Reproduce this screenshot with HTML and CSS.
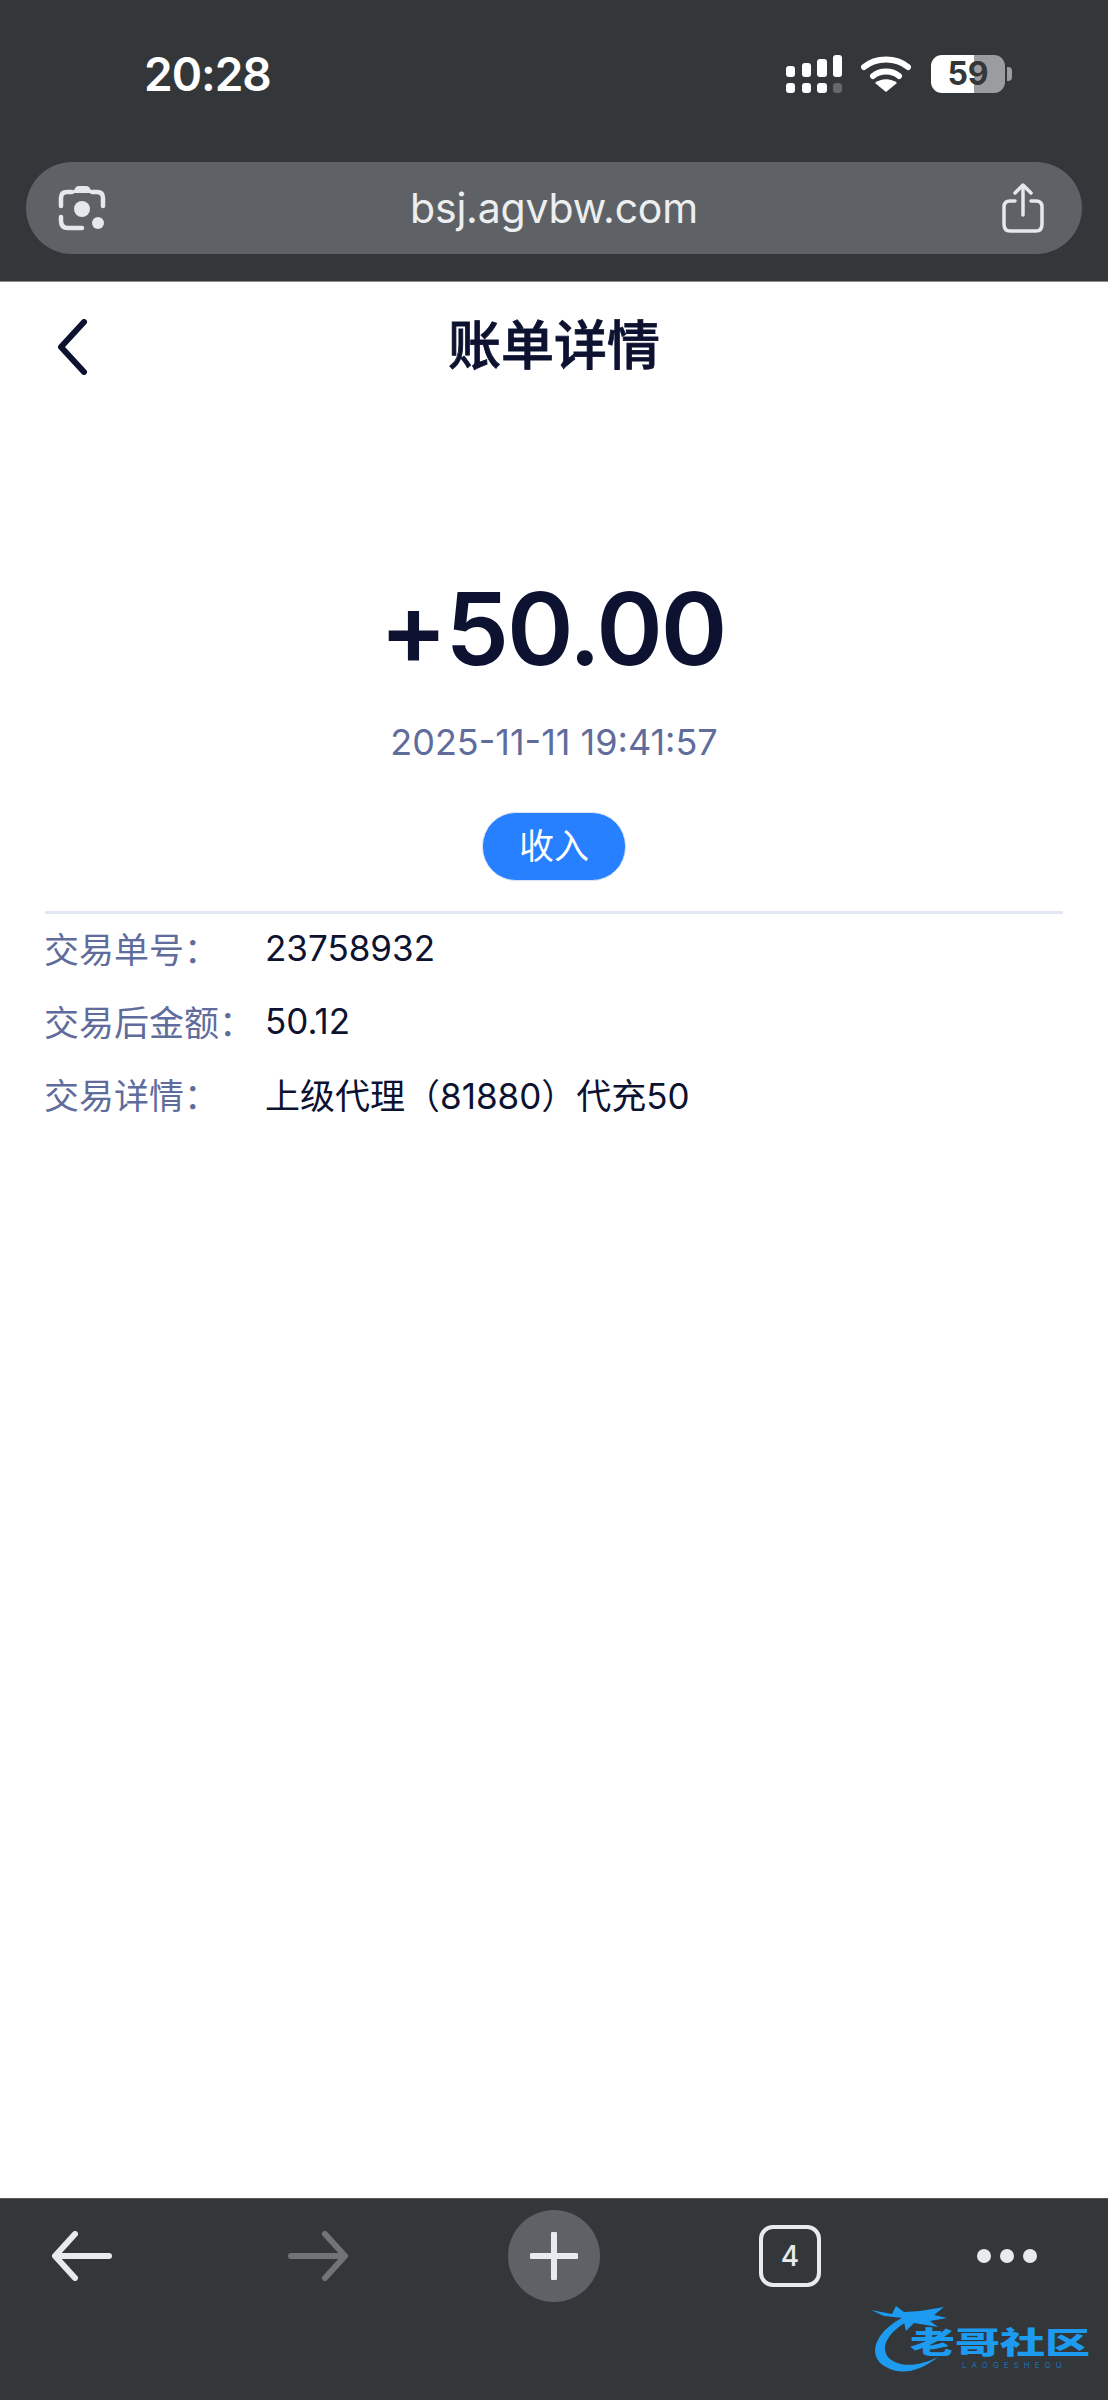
FILE: index.html
```html
<!DOCTYPE html>
<html lang="zh-CN">
<head>
  <meta charset="UTF-8" />
  <meta name="viewport" content="width=device-width, initial-scale=1.0"/>
  <title>账单详情</title>
  <link rel="stylesheet" href="styles.css">
</head>
<body>
  <header class="browser-top">
    <div class="status-bar">
      <span class="clock">20:28</span>
      <div class="status-icons">
        <svg class="signal" width="56" height="38" viewBox="0 0 56 38">
          <g fill="#fff">
            <rect x="0" y="11" width="9" height="11" rx="3"/>
            <rect x="16" y="8" width="9" height="14" rx="3"/>
            <rect x="31" y="4" width="10" height="18" rx="3"/>
            <rect x="47" y="0" width="9" height="22" rx="3"/>
            <rect x="0" y="28" width="9" height="10" rx="3"/>
            <rect x="16" y="28" width="9" height="10" rx="3"/>
            <rect x="31" y="28" width="10" height="10" rx="3"/>
            <rect x="47" y="28" width="9" height="10" rx="3" fill="#66686b"/>
          </g>
        </svg>
        <svg class="wifi" width="50" height="36" viewBox="0 0 50 36">
          <path d="M3 11 C15 1 35 1 47 11" fill="none" stroke="#fff" stroke-width="6" stroke-linecap="round"/>
          <path d="M12 20 C19 14 31 14 38 20" fill="none" stroke="#fff" stroke-width="6" stroke-linecap="round"/>
          <path d="M25 36 L14 27 C20 22 30 22 36 27 Z" fill="#fff"/>
        </svg>
        <div class="battery">
          <div class="battery-body">59</div>
          <div class="battery-cap"></div>
        </div>
      </div>
    </div>
    <div class="url-bar">
      <svg class="lens" width="48" height="48" viewBox="0 0 48 48">
        <g fill="none" stroke="#e6e8eb" stroke-width="4.5" stroke-linecap="round">
          <path d="M3 22 V14 Q3 8 9 8 H14"/>
          <path d="M34 8 H39 Q45 8 45 14 V22"/>
          <path d="M3 33 V37 Q3 44 10 44 H24"/>
        </g>
        <path d="M14 9 L18 3 Q19 2 21 2 H28 Q30 2 31 3 L35 9 Z" fill="#e6e8eb"/>
        <circle cx="24" cy="25" r="8" fill="#e6e8eb"/>
        <circle cx="40" cy="39" r="6" fill="#e6e8eb"/>
      </svg>
      <span class="url-text">bsj.agvbw.com</span>
      <svg class="share" width="42" height="50" viewBox="0 0 42 50">
        <g fill="none" stroke="#e6e8eb" stroke-width="3.5" stroke-linecap="round" stroke-linejoin="round">
          <path d="M13 18 H8 Q2 18 2 24 V41 Q2 48 8 48 H34 Q40 48 40 41 V24 Q40 18 34 18 H29"/>
          <path d="M21 32 V3"/>
          <path d="M13 10 L21 2 L29 10"/>
        </g>
      </svg>
    </div>
  </header>

  <main class="page">
    <div class="nav-bar">
      <svg class="nav-back" width="32" height="56" viewBox="0 0 32 56">
        <path d="M28 3 L5 28 L28 53" fill="none" stroke="#0c1230" stroke-width="6" stroke-linecap="round" stroke-linejoin="round"/>
      </svg>
      <h1 class="nav-title">账单详情</h1>
    </div>

    <section class="summary">
      <div class="amount">+50.00</div>
      <div class="date">2025-11-11 19:41:57</div>
      <div class="tag">收入</div>
    </section>

    <section class="details">
      <div class="row">
        <span class="row-label">交易单号：</span>
        <span class="row-value">23758932</span>
      </div>
      <div class="row">
        <span class="row-label">交易后金额：</span>
        <span class="row-value">50.12</span>
      </div>
      <div class="row">
        <span class="row-label">交易详情：</span>
        <span class="row-value">上级代理（81880）代充50</span>
      </div>
    </section>
  </main>

  <footer class="browser-bottom">
    <div class="tool-item">
      <svg width="60" height="50" viewBox="0 0 60 50">
        <path d="M57 25 H4 M23 3 L3 25 L23 47" fill="none" stroke="#e8eaed" stroke-width="6" stroke-linecap="round" stroke-linejoin="round"/>
      </svg>
    </div>
    <div class="tool-item">
      <svg width="60" height="50" viewBox="0 0 60 50">
        <path d="M3 25 H56 M37 3 L57 25 L37 47" fill="none" stroke="#717375" stroke-width="6" stroke-linecap="round" stroke-linejoin="round"/>
      </svg>
    </div>
    <div class="tool-item">
      <div class="new-tab">
        <svg width="48" height="48" viewBox="0 0 48 48">
          <path d="M24 2 V46 M2 24 H46" fill="none" stroke="#e8eaed" stroke-width="6" stroke-linecap="round"/>
        </svg>
      </div>
    </div>
    <div class="tool-item">
      <div class="tab-count">4</div>
    </div>
    <div class="tool-item tool-more">
      <span class="dot"></span><span class="dot"></span><span class="dot"></span>
    </div>

    <!-- watermark sits on top of the toolbar -->
    <div class="watermark">
      <svg class="wm-dragon" width="80" height="72" viewBox="0 0 80 72">
        <path d="M34 12 C8 24 -6 50 16 62 C30 70 48 68 68 52 C48 62 30 62 20 54 C8 44 18 26 40 15 Z" fill="#1d9bf0"/>
        <path d="M1 5 L22 9 L26 1 L34 7 L50 6 L74 2 L64 10 L77 13 L60 16 L68 22 L44 18 L36 26 L33 13 L14 11 Z" fill="#1d9bf0"/>
      </svg>
      <div class="wm-name">老哥社区</div>
      <div class="wm-latin">LAOGESHEQU</div>
    </div>
  </footer>
</body>
</html>
```

FILE: styles.css
```css
/* Base styles */
body {
  margin: 0;
  width: 1108px;
  height: 2400px;
  display: flex;
  flex-direction: column;
  background-color: #fff;
  font-family: Inter, "Noto Sans CJK SC", sans-serif;
  color: #0c1230;
  overflow: hidden;
}

/* Browser chrome, top */
.browser-top {
  height: 282px;
  box-sizing: border-box;
  padding: 55px 26px 0;
  background-color: #33373a;
  border-bottom: 1px solid #8a8c8e;
  flex-shrink: 0;
}

.status-bar {
  height: 38px;
  display: flex;
  justify-content: space-between;
  align-items: center;
  padding: 0 70px 0 118px;
}

.clock {
  font-size: 46px;
  font-weight: 600;
  letter-spacing: -1px;
  color: #fff;
}

.status-icons {
  display: flex;
  align-items: center;
}

.wifi {
  margin-left: 19px;
}

.battery {
  display: flex;
  align-items: center;
  margin-left: 20px;
}

.battery-body {
  width: 74px;
  height: 38px;
  border-radius: 11px;
  background: linear-gradient(90deg, #fff 43px, #9b9c9e 43px);
  text-align: center;
  font-size: 32px;
  font-weight: 700;
  line-height: 38px;
  color: #33373a;
}

.battery-cap {
  width: 5px;
  height: 14px;
  margin-left: 2px;
  border-radius: 0 4px 4px 0;
  background-color: #9b9c9e;
}

.url-bar {
  height: 92px;
  margin-top: 69px;
  padding: 0 38px 0 32px;
  display: flex;
  align-items: center;
  justify-content: space-between;
  background-color: #5e6266;
  border-radius: 46px;
}

.url-text {
  font-size: 41px;
  letter-spacing: -0.2px;
  color: #eceef0;
}

/* Page */
.page {
  flex: 1;
  padding: 0 45px;
}

.nav-bar {
  position: relative;
  height: 84px;
  padding-top: 22px;
  display: flex;
  align-items: center;
  justify-content: center;
}

.nav-back {
  position: absolute;
  left: 11px;
  top: 37px;
}

.nav-title {
  margin: 0;
  font-size: 53px;
  font-weight: 500;
  line-height: 84px;
  -webkit-text-stroke: 0.8px #0c1230;
}

.summary {
  display: flex;
  flex-direction: column;
  align-items: center;
  padding-top: 180px;
  padding-bottom: 30px;
  border-bottom: 3px solid #e3e6f3;
}

.amount {
  font-size: 101px;
  font-weight: 600;
  letter-spacing: -2px;
  line-height: 121px;
  margin-right: 3px;
}

.date {
  margin-top: 31px;
  font-size: 36px;
  line-height: 44px;
  color: #5f6c9c;
}

.tag {
  width: 142px;
  height: 67px;
  margin-top: 48px;
  border: 1px solid #dce4f5;
  border-radius: 34px;
  background-color: #2680ff;
  color: #fff;
  font-size: 35px;
  line-height: 67px;
  text-align: center;
}

.details {
  margin-top: -3px;
}

.row {
  display: flex;
  height: 73px;
  align-items: center;
  font-size: 35px;
}

.row-label {
  width: 221px;
  flex-shrink: 0;
  margin-left: -1px;
  color: #5f6c9c;
}

/* Browser chrome, bottom */
.browser-bottom {
  position: relative;
  height: 202px;
  box-sizing: border-box;
  padding: 11px 0 0 36px;
  display: flex;
  align-items: flex-start;
  gap: 144px;
  background-color: #33373a;
  border-top: 1px solid #55585b;
  flex-shrink: 0;
}

.tool-item {
  width: 92px;
  height: 92px;
  display: flex;
  align-items: center;
  justify-content: center;
  flex-shrink: 0;
}

.new-tab {
  width: 92px;
  height: 92px;
  display: flex;
  align-items: center;
  justify-content: center;
  border-radius: 50%;
  background-color: #5e6266;
}

.tab-count {
  width: 54px;
  height: 54px;
  border: 4.5px solid #e8eaed;
  border-radius: 14px;
  color: #e8eaed;
  font-size: 28px;
  font-weight: 500;
  line-height: 54px;
  text-align: center;
}

.tool-more {
  width: 54px;
  gap: 9px;
}

.dot {
  width: 14px;
  height: 14px;
  border-radius: 50%;
  background-color: #e8eaed;
  flex-shrink: 0;
}

.watermark {
  position: absolute;
  left: 870px;
  top: 106px;
  width: 225px;
  height: 72px;
}

.wm-dragon {
  position: absolute;
  left: 0;
  top: 0;
}

.wm-name {
  position: absolute;
  left: 40px;
  top: 23px;
  font-size: 45px;
  font-weight: 900;
  line-height: 28px;
  color: #1d9bf0;
  white-space: nowrap;
  transform: scaleY(0.66);
}

.wm-latin {
  position: absolute;
  left: 92px;
  top: 55px;
  font-size: 8px;
  line-height: 10px;
  letter-spacing: 5px;
  color: #1a6fb0;
  white-space: nowrap;
}
```
